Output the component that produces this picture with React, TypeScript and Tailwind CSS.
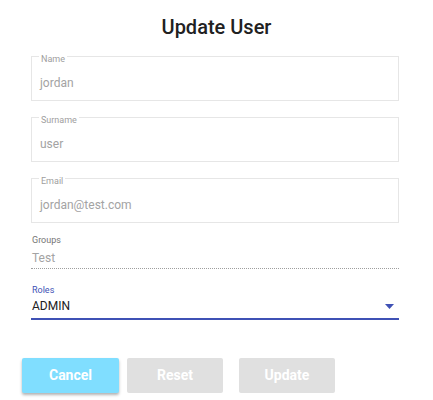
import React from 'react';

interface OutlinedFieldProps {
  label: string;
  value: string;
  className?: string;
}

const OutlinedField: React.FC<OutlinedFieldProps> = ({ label, value, className = '' }) => (
  <div className={`relative h-[45px] border border-[#e6e6e6] ${className}`}>
    <span className="absolute left-[7px] top-[-4px] bg-white px-[2px] text-[9px] leading-[12px] text-[#9e9e9e]">
      {label}
    </span>
    <div className="pl-[8px] pt-[18px] text-[12px] leading-[16px] text-[#a3a3a3]">{value}</div>
  </div>
);

const App: React.FC = () => {
  return (
    <div className="h-[400px] w-[433px] bg-white pt-[13px] font-['Roboto',sans-serif]">
      <h1 className="text-center text-[20px] font-medium leading-[28px] text-[#212121]">Update User</h1>

      <div className="ml-[31px] mt-[15px] w-[368px]">
        <OutlinedField label="Name" value="jordan" />
        <OutlinedField label="Surname" value="user" className="mt-[16px]" />
        <OutlinedField label="Email" value="jordan@test.com" className="mt-[16px]" />

        {/* Groups (read only) */}
        <div className="mt-[11px] border-b border-dotted border-[#9e9e9e] pb-[2px]">
          <div className="pl-[1px] text-[9px] leading-[12px] text-[#757575]">Groups</div>
          <div className="mt-[4px] pl-[1px] text-[12px] leading-[16px] text-[#a3a3a3]">Test</div>
        </div>

        {/* Roles select */}
        <div className="mt-[15px] border-b-2 border-[#3f51b5] pb-[4px]">
          <div className="pl-[1px] text-[9px] leading-[12px] text-[#3f51b5]">Roles</div>
          <div className="mt-[2px] flex items-center justify-between pl-[1px] pr-[5px]">
            <span className="text-[12px] leading-[16px] text-[#212121]">ADMIN</span>
            <svg width="9" height="5" viewBox="0 0 9 5">
              <path d="M0 0h9L4.5 5z" fill="#3f51b5" />
            </svg>
          </div>
        </div>
      </div>

      <div className="ml-[22px] mt-[38px] flex">
        <button className="h-[35px] w-[97px] rounded-[2px] bg-[#80deff] text-[14px] font-bold text-white shadow-[0_2px_3px_rgba(0,0,0,0.3)]">
          Cancel
        </button>
        <button className="ml-[8px] h-[35px] w-[96px] rounded-[2px] bg-[#e0e0e0] text-[14px] font-bold text-white">
          Reset
        </button>
        <button className="ml-[16px] h-[35px] w-[96px] rounded-[2px] bg-[#e0e0e0] text-[14px] font-bold text-white">
          Update
        </button>
      </div>
    </div>
  );
};

export default App;
